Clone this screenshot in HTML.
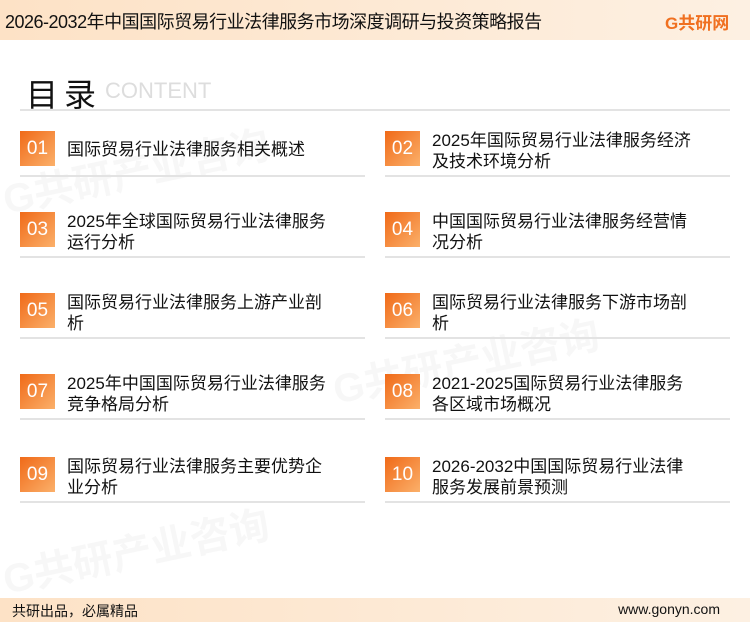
<!DOCTYPE html>
<html><head><meta charset="utf-8"><style>
*{margin:0;padding:0;box-sizing:border-box}
body{width:750px;height:622px;position:relative;background:#fff;font-family:"Liberation Sans","Noto Sans CJK SC",sans-serif;overflow:hidden}
.hd{position:absolute;left:0;top:0;width:750px;height:40px;background:linear-gradient(90deg,#fde2c6,#fdf0e2)}
.hd .t{position:absolute;left:5px;top:8px;font-size:18px;color:#111;letter-spacing:-0.5px}
.logo{position:absolute;left:665px;top:9px;font-size:17px;font-weight:bold;color:#f07020}
.ft{position:absolute;left:0;top:598px;width:750px;height:24px;background:linear-gradient(90deg,#fde2c6,#fdf0e2);font-size:14px;color:#111}
.ft .l{position:absolute;left:12px;top:3px}
.ft .r{position:absolute;right:30px;top:3px}
.ttl{position:absolute;left:26px;top:70px;font-size:32px;color:#111;letter-spacing:6px}
.ct{position:absolute;left:105px;top:78px;font-size:22px;color:#ddd}
.hl{position:absolute;left:20px;top:109px;width:710px;height:2px;background:#e3e3e3}
.it{position:absolute;width:345px;height:80px}
.b{position:absolute;left:0;top:0;width:35px;height:35px;background:linear-gradient(135deg,#f06a18,#fbb06a);color:#fff;font-size:19px;line-height:35px;text-align:center}
.tx{position:absolute;left:47px;top:0;font-size:17px;line-height:21px;color:#111;width:265px}
.ln{position:absolute;left:0;top:44px;width:345px;height:2px;background:#e3e3e3}
.wm{position:absolute;color:rgba(0,0,0,0.03);font-size:40px;font-weight:bold;transform:rotate(-12deg)}
</style></head><body>
<div class="wm" style="left:0;top:140px">G共研产业咨询</div>
<div class="wm" style="left:330px;top:330px">G共研产业咨询</div>
<div class="wm" style="left:0;top:520px">G共研产业咨询</div>
<div class="hd"><div class="t">2026-2032年中国国际贸易行业法律服务市场深度调研与投资策略报告</div><div class="logo">G共研网</div></div>
<div class="ttl">目录</div><div class="ct">CONTENT</div><div class="hl"></div>

<div class="it" style="left:20px;top:131px"><div class="b">01</div><div class="tx" style="top:8px">国际贸易行业法律服务相关概述</div><div class="ln"></div></div>
<div class="it" style="left:385px;top:131px"><div class="b">02</div><div class="tx" style="top:-1px">2025年国际贸易行业法律服务经济及技术环境分析</div><div class="ln"></div></div>
<div class="it" style="left:20px;top:212px"><div class="b">03</div><div class="tx" style="top:-1px">2025年全球国际贸易行业法律服务运行分析</div><div class="ln"></div></div>
<div class="it" style="left:385px;top:212px"><div class="b">04</div><div class="tx" style="top:-1px">中国国际贸易行业法律服务经营情况分析</div><div class="ln"></div></div>
<div class="it" style="left:20px;top:293px"><div class="b">05</div><div class="tx" style="top:-1px">国际贸易行业法律服务上游产业剖析</div><div class="ln"></div></div>
<div class="it" style="left:385px;top:293px"><div class="b">06</div><div class="tx" style="top:-1px">国际贸易行业法律服务下游市场剖析</div><div class="ln"></div></div>
<div class="it" style="left:20px;top:374px"><div class="b">07</div><div class="tx" style="top:-1px">2025年中国国际贸易行业法律服务竞争格局分析</div><div class="ln"></div></div>
<div class="it" style="left:385px;top:374px"><div class="b">08</div><div class="tx" style="top:-1px">2021-2025国际贸易行业法律服务各区域市场概况</div><div class="ln"></div></div>
<div class="it" style="left:20px;top:457px"><div class="b">09</div><div class="tx" style="top:-1px">国际贸易行业法律服务主要优势企业分析</div><div class="ln"></div></div>
<div class="it" style="left:385px;top:457px"><div class="b">10</div><div class="tx" style="top:-1px">2026-2032中国国际贸易行业法律服务发展前景预测</div><div class="ln"></div></div>

<div class="ft"><div class="l">共研出品，必属精品</div><div class="r">www.gonyn.com</div></div>
</body></html>
